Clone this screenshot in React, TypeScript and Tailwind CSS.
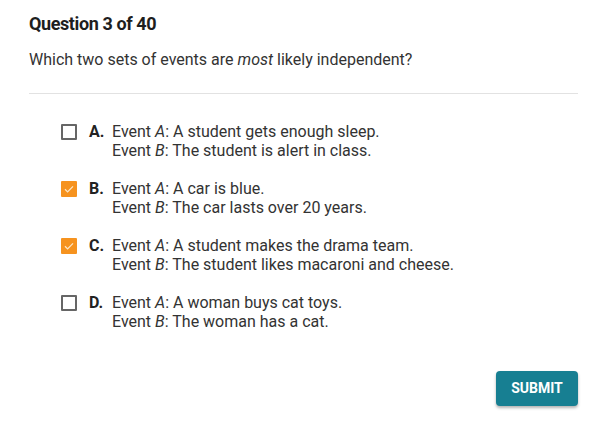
import React, { useState } from "react";

interface Option {
  letter: string;
  a: string;
  b: string;
}

const options: Option[] = [
  { letter: "A.", a: "A student gets enough sleep.", b: "The student is alert in class." },
  { letter: "B.", a: "A car is blue.", b: "The car lasts over 20 years." },
  { letter: "C.", a: "A student makes the drama team.", b: "The student likes macaroni and cheese." },
  { letter: "D.", a: "A woman buys cat toys.", b: "The woman has a cat." },
];

const CheckBox: React.FC<{ checked: boolean }> = ({ checked }) =>
  checked ? (
    <div className="w-[16px] h-[16px] bg-[#f6931f] flex items-center justify-center rounded-[1px]">
      <svg width="12" height="12" viewBox="0 0 12 12" fill="none">
        <path d="M2 6.3l2.6 2.6L10 3.4" stroke="#fde7c8" strokeWidth="1.3" />
      </svg>
    </div>
  ) : (
    <div className="w-[16px] h-[16px] border-2 border-[#666] rounded-[1px]" />
  );

const App: React.FC = () => {
  const [checked, setChecked] = useState<boolean[]>([false, true, true, false]); // selected answers

  const toggle = (i: number) => {
    setChecked((curr) => curr.map((c, j) => (j == i ? !c : c)));
  };

  return (
    <div className="w-[602px] h-[429px] bg-white font-['Roboto',sans-serif] text-[#333] px-[29px] pt-[12px]">
      <div className="text-[18px] font-bold text-[#1e1e1e] leading-[24px] tracking-[-0.4px]">Question 3 of 40</div>
      <div className="text-[16px] mt-[13px] leading-[22px]">
        Which two sets of events are <i>most</i> likely independent?
      </div>
      <div className="border-t border-[#e2e2e2] mt-[22px] w-[549px]" />

      <div className="flex flex-col gap-[19px] mt-[28px] pl-[32px]">
        {options.map((o, i) => (
          <div key={o.letter} className="flex items-start cursor-pointer" onClick={() => toggle(i)}>
            <div className="mt-[2px]">
              <CheckBox checked={checked[i]} />
            </div>
            <div className="ml-[12px] w-[23px] text-[16px] font-bold text-[#222] leading-[19px]">{o.letter}</div>
            <div className="text-[16px] leading-[19px] text-[#333]">
              <div>
                Event <i>A</i>: {o.a}
              </div>
              <div>
                Event <i>B</i>: {o.b}
              </div>
            </div>
          </div>
        ))}
      </div>

      <div className="flex justify-end mt-[40px] w-[549px]">
        <button className="bg-[#177f92] text-white text-[14px] font-bold h-[35px] w-[82px] rounded-[4px] shadow-[0_2px_3px_rgba(0,0,0,0.3)]">
          SUBMIT
        </button>
      </div>
    </div>
  );
};

export default App;
